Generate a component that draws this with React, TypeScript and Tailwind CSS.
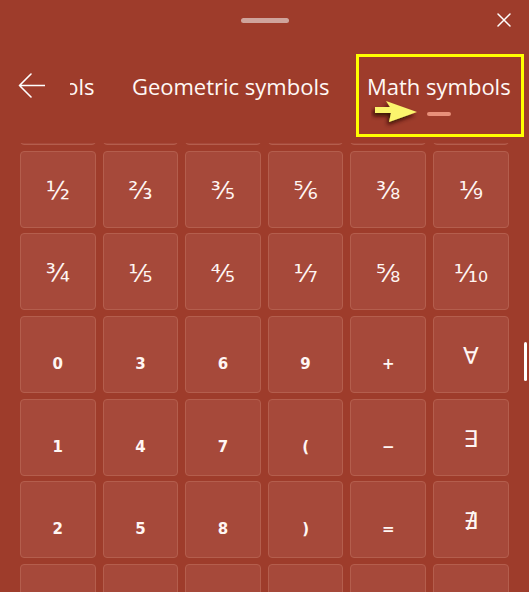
import React from "react";

type Cell = { label: string; kind: "frac" | "small" | "logic" };

const frac = (s: string): Cell => ({ label: s, kind: "frac" });
const small = (s: string): Cell => ({ label: s, kind: "small" });
const logic = (s: string): Cell => ({ label: s, kind: "logic" });

// first row sits above the visible area (scrolled), last one is cut off at the bottom
const rows: Cell[][] = [
  ["¼", "⅓", "⅛", "⅙", "⅞", "⅖"].map(frac),
  ["½", "⅔", "⅗", "⅚", "⅜", "⅑"].map(frac),
  ["¾", "⅕", "⅘", "⅐", "⅝", "⅒"].map(frac),
  [small("0"), small("3"), small("6"), small("9"), small("+"), logic("∀")],
  [small("1"), small("4"), small("7"), small("("), small("−"), logic("∃")],
  [small("2"), small("5"), small("8"), small(")"), small("="), logic("∄")],
  [small("×"), small("÷"), small("<"), small(">"), small("±"), logic("∅")],
];

const tabs = ["Latin symbols", "Geometric symbols", "Math symbols"];

function Tile({ cell }: { cell: Cell }) {
  return (
    <button
      className={
        "flex items-center justify-center rounded-[4px] border border-[#b45e4d] bg-[#a6493a] text-[#fff6f3] " +
        (cell.kind === "frac"
          ? "pt-[3px] text-[25px]"
          : cell.kind === "small"
          ? "pt-[19px] text-[15px] font-semibold"
          : "pt-[3px] text-[23px]")
      }
      style={{ fontFamily: '"DejaVu Sans", "Noto Sans", sans-serif' }}
    >
      {cell.label}
    </button>
  );
}

function BackArrow() {
  return (
    <svg width="27" height="25" viewBox="0 0 27 25" className="shrink-0" fill="none">
      <path d="M1.5 12.5 H26.5 M13 1 L1.5 12.5 L13 24" stroke="#fff" strokeWidth="1.6" strokeLinecap="round" strokeLinejoin="round" />
    </svg>
  );
}

function CloseIcon() {
  return (
    <svg width="14" height="14" viewBox="0 0 14 14" fill="none">
      <path d="M1 1 L13 13 M13 1 L1 13" stroke="#fff" strokeWidth="1.5" strokeLinecap="round" />
    </svg>
  );
}

function YellowPointer() {
  return (
    <svg width="54" height="34" viewBox="0 0 54 34" className="absolute left-[12px] top-[40px]" fill="none">
      <defs>
        <filter id="sh" x="-30%" y="-30%" width="160%" height="180%">
          <feDropShadow dx="-2" dy="3" stdDeviation="2" floodColor="#2e0a04" floodOpacity="0.9" />
        </filter>
      </defs>
      <g filter="url(#sh)">
        <path d="M4 10 H19 L15 4 L46 15 L18 25 L20 16 H4 Z" fill="#fbf56d" />
      </g>
    </svg>
  );
}

export default function App() {
  return (
    <div
      className="flex h-[592px] w-[529px] flex-col overflow-hidden bg-[#9e3c2b] text-white"
      style={{ fontFamily: '"Open Sans", "Noto Sans", sans-serif' }}
    >
      {/* top bar */}
      <div className="grid h-[143px] shrink-0 grid-rows-[auto_1fr]">
        <div className="grid grid-cols-[1fr_auto_1fr] items-center pt-[13px]">
          <div />
          <div className="h-[5px] w-[48px] rounded-full bg-[#cfa49c]" />
          <div className="flex justify-end pr-[18px]">
            <CloseIcon />
          </div>
        </div>

        <div className="flex items-start pt-[45px]">
          <div className="ml-[18px] mt-[0.5px]">
            <BackArrow />
          </div>
          <div className="-mt-[19px] ml-[25px] min-w-0 flex-1 overflow-hidden pb-[22px] pt-[19px]">
            <div className="-ml-[116.5px] flex gap-[37.5px]">
              {tabs.map((t) => {
                const active = t === "Math symbols";
                return (
                  <div key={t} className="relative flex shrink-0 flex-col items-center">
                    <span className="whitespace-nowrap text-[22px] leading-[28px] text-[#fff8f5]">{t}</span>
                    <div className={"mt-[11.5px] h-[4px] w-[24px] rounded-full " + (active ? "bg-[#e8907a]" : "bg-transparent")} />
                    {active && (
                      <div className="absolute -left-[11px] -right-[13.5px] -top-[18.5px] h-[83px] border-[3px] border-[#ffff00]">
                        <YellowPointer />
                      </div>
                    )}
                  </div>
                );
              })}
            </div>
          </div>
        </div>
      </div>

      {/* symbol grid */}
      <div className="flex min-h-0 flex-1 items-start overflow-hidden pl-[20px]">
        <div className="-mt-[75px] grid grid-cols-[repeat(6,75.6px)] auto-rows-[77px] gap-x-[7px] gap-y-[5.7px]">
          {rows.flat().map((c, i) => (
            <Tile key={i} cell={c} />
          ))}
        </div>
        <div className="ml-[15.5px] mt-[199px] h-[39px] w-[2.5px] rounded-full bg-white" />
      </div>
    </div>
  );
}
